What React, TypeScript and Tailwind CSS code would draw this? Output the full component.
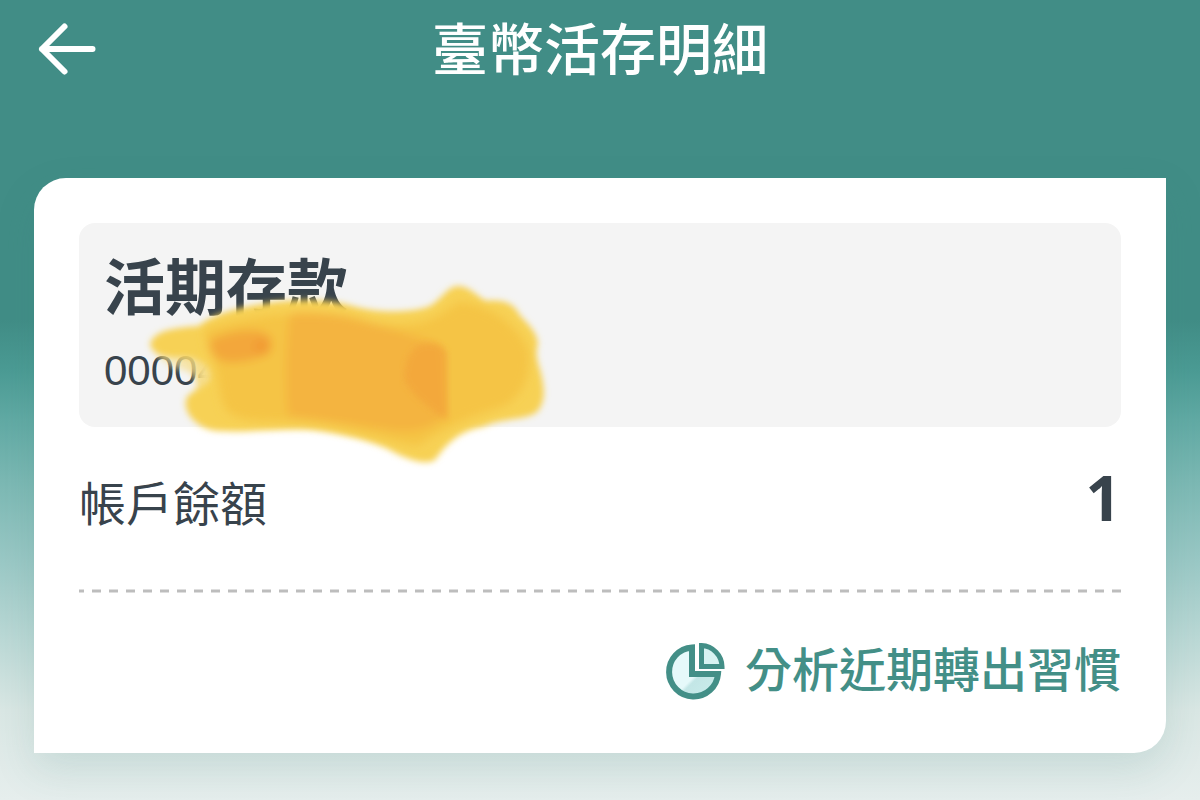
import React from 'react';

const ACCOUNT = {
  name: '活期存款',
  number: '00004',
  balance: '1',
};

const BackIcon = () => (
  <svg className="w-16 h-16" viewBox="0 0 64 64" fill="none" stroke="currentColor" strokeWidth="6" strokeLinecap="round" strokeLinejoin="round">
    <path d="M58.500 32H8M30.500 9.500L8 32l22.500 22.500" />
  </svg>
);

const PieIcon = () => (
  <svg className="w-[60px] h-[60px]" viewBox="0 0 60 60" fill="none">
    <defs>
      <linearGradient id="pieFill" x1="0" y1="0" x2="1" y2="1">
        <stop offset="0.55" stopColor="#e6f9fa" />
        <stop offset="0.6" stopColor="#c3e6e6" />
        <stop offset="0.95" stopColor="#c9eceb" />
      </linearGradient>
    </defs>
    <path d="M27 6.500A24.500 24.500 0 1 0 53 33H27Z" fill="url(#pieFill)" stroke="#438f87" strokeWidth="6" />
    <path d="M36.500 4.500A21.500 21.500 0 0 1 57 25.500H36.500Z" fill="#d9f3f2" stroke="#438f87" strokeWidth="5" />
  </svg>
);

// Marker strokes hiding the rest of the account number
const MarkerScribble = () => (
  <svg className="absolute left-14 top-14 w-[420px] h-[200px] pointer-events-none" viewBox="135 279 420 200" aria-hidden="true">
    <defs>
      <filter id="soft" x="-10%" y="-10%" width="120%" height="120%">
        <feGaussianBlur stdDeviation="3" />
      </filter>
      <filter id="softer" x="-20%" y="-20%" width="140%" height="140%">
        <feGaussianBlur stdDeviation="5" />
      </filter>
      <linearGradient id="fade" x1="0" y1="0" x2="1" y2="0">
        <stop offset="0" stopColor="#f5e6b0" stopOpacity="0.4" />
        <stop offset="0.5" stopColor="#f6de8c" stopOpacity="0.75" />
        <stop offset="1" stopColor="#f7d154" />
      </linearGradient>
    </defs>
    <path d="M156 352H222V396H196C197 386 197 380 192 374C182 366 164 372 156 352Z" fill="url(#fade)" filter="url(#soft)" />
    <ellipse cx="209" cy="372" rx="9" ry="17" fill="#f6de8e" opacity="0.9" filter="url(#soft)" />
    <path
      d="M150 344C154 332 168 328 199 326C215 312 245 306 275 302C305 298 335 300 356 307C385 314 415 312 430 306C443 298 448 286 458 286C470 286 476 296 486 301C502 299 514 303 519 314C525 322 537 330 538 344C533 358 541 366 543 384C545 396 543 405 537 412C525 421 505 417 482 427C458 431 446 445 435 460C425 466 405 459 390 450C370 440 345 435 320 431C290 427 250 433 218 431C200 430 183 415 186 400C188 390 206 390 211 378C212 366 200 359 190 358C176 357 154 360 150 344Z"
      fill="#f7d154"
      filter="url(#soft)"
    />
    <g filter="url(#softer)">
      <path d="M204 330C240 316 330 304 370 322C410 330 435 322 458 302C490 304 520 326 529 352C530 375 526 392 505 406C470 416 440 430 418 446C380 440 350 426 300 422C270 420 240 424 226 410C216 392 222 372 208 350Z" fill="#f5c445" />
      <path d="M290 314C330 308 380 326 440 344L446 416C430 430 410 434 390 430C350 424 320 420 288 416C284 380 286 340 290 314Z" fill="#f4b440" />
      <path d="M210 340C230 330 258 326 270 336C276 350 262 360 240 362C222 364 210 360 210 340Z" fill="#f3a73b" />
      <circle cx="262" cy="347" r="9" fill="#f29c34" />
    </g>
    <path d="M418 346C430 340 446 346 447 354V420C434 412 404 390 404 376C405 362 410 350 418 346Z" fill="#f3a63a" opacity="0.8" filter="url(#soft)" />
  </svg>
);

const App: React.FC = () => {
  return (
    <div className="min-h-screen bg-[linear-gradient(180deg,#418d86_0px,#418d86_320px,#4b9b94_370px,#61aaa4_420px,#7bb8b3_480px,#9ac8c5_560px,#bcd9d6_640px,#dae7e4_710px,#e6eeed_800px)] font-['Liberation_Sans','Noto_Sans_CJK_TC',sans-serif] text-[#38434c]">
      <header className="grid grid-cols-[1fr_auto_1fr] items-center px-[34px] h-[98px] text-white">
        <button type="button" aria-label="返回" className="justify-self-start">
          <BackIcon />
        </button>
        <h1 className="pt-1 text-[56px] leading-[94px] font-medium">臺幣活存明細</h1>
      </header>

      <main className="px-[34px] pt-20 pb-12">
        <section className="bg-white rounded-tl-[32px] rounded-br-[32px] px-[45px] pt-[45px] pb-11 shadow-[0_16px_40px_rgba(60,130,125,0.16)]">
          <div className="relative h-[204px] rounded-2xl bg-[#f4f4f4] px-[25px] pt-[26px]">
            <h2 className="text-[61px] leading-[80px] font-bold">{ACCOUNT.name}</h2>
            <p className="text-[42px] leading-[84px]">{ACCOUNT.number}</p>
            <MarkerScribble />
          </div>

          <div className="flex items-baseline justify-between pt-[30px] pb-11 leading-[80px]">
            <span className="text-[47px]">帳戶餘額</span>
            <span className="font-['Open_Sans',sans-serif] text-[62px] font-bold">{ACCOUNT.balance}</span>
          </div>

          <svg className="block w-full h-1" aria-hidden="true">
            <line x1="-4" y1="2" x2="100%" y2="2" stroke="#bdbdbd" strokeWidth="3" strokeDasharray="9 8" />
          </svg>

          <div className="flex justify-end pt-10">
            <button type="button" className="flex items-center gap-5 text-[47px] leading-[76px] font-medium text-[#438f87]">
              <PieIcon />
              分析近期轉出習慣
            </button>
          </div>
        </section>
      </main>
    </div>
  );
};

export default App;
